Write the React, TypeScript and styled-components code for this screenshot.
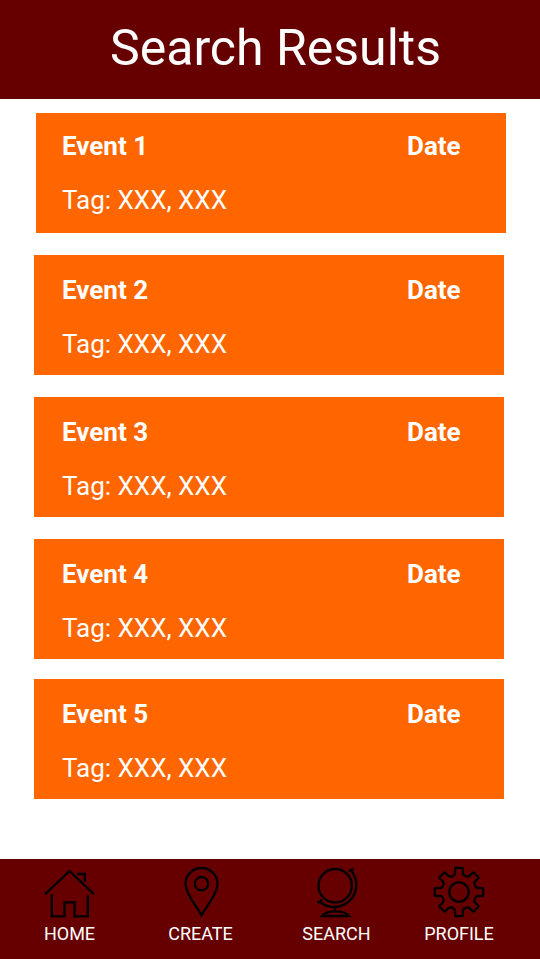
import React from "react";
import styled, { createGlobalStyle } from "styled-components";

const GlobalStyle = createGlobalStyle`
  * { box-sizing: border-box; }
  body { margin: 0; background: #fff; font-family: Roboto, sans-serif; color: #fff; }
`;

const Screen = styled.div`
  width: 540px;
  height: 959px;
  display: flex;
  flex-direction: column;
  overflow: hidden;
`;

const Header = styled.header`
  height: 99px;
  flex: none;
  padding: 19px 0 0 11px;
  background: #660000;
  text-align: center;
`;

const Title = styled.h1`
  margin: 0;
  font-size: 50px;
  line-height: 58px;
  font-weight: 400;
  white-space: nowrap;
`;

const Results = styled.main`
  flex: 1;
  display: flex;
  flex-direction: column;
  padding: 14px 0 0 34px;
`;

const Card = styled.article<{ $shifted?: boolean; $gap: number }>`
  width: 470px;
  height: 120px;
  flex: none;
  margin-left: ${(p) => (p.$shifted ? 2 : 0)}px;
  margin-bottom: ${(p) => p.$gap}px;
  padding: ${(p) => (p.$shifted ? "18px 0 0 26px" : "20px 0 0 28px")};
  background: #ff6600;
  font-size: 26px;
  line-height: 30px;
`;

const CardTop = styled.div`
  display: grid;
  grid-template-columns: 345px 1fr;
  margin-bottom: 24px;
  font-weight: 700;
`;

const Tags = styled.div`
  white-space: nowrap;
`;

const Nav = styled.nav`
  height: 100px;
  flex: none;
  display: grid;
  grid-template-columns: 139px 123px 149px 96px;
  padding-top: 8px;
  background: #660000;
`;

const NavItem = styled.div`
  display: flex;
  flex-direction: column;
  align-items: center;
  font-size: 18px;
  line-height: 22px;
`;

const Icon = styled.svg`
  width: 52px;
  height: 50px;
  margin-bottom: 6px;
  overflow: visible;
  fill: none;
  stroke: #000;
  stroke-width: 7;
`;

const HomeIcon = () => (
  <Icon viewBox="40.5 36 156 150">
    <path d="M43 118 L117 48 L191 118 M139 57 H163 V81 M64 118 V184 H102 V142 H132 V184 H172 V121" />
  </Icon>
);

const PinIcon = () => (
  <Icon viewBox="43.5 36 156 150">
    <path d="M123 181 C111 158 75 118 75 86 A48 47 0 0 1 171 86 C171 118 135 158 123 181 Z" />
    <circle cx="123" cy="86" r="20" />
  </Icon>
);

const GlobeIcon = () => (
  <Icon viewBox="46.5 36 156 150">
    <circle cx="119" cy="92" r="50" />
    <path d="M160 49 L174 41 M168 48 A66.5 66.5 0 0 1 74 141 M66 144 L80 134 M119 158 V170 M79 183 H161 Q150 169 120 169 Q90 169 79 183 Z" />
  </Icon>
);

const toothAngles = [0, 45, 90, 135, 180, 225, 270, 315];
const point = (radius: number, angle: number) => {
  const a = (angle * Math.PI) / 180;
  return `${(117 + radius * Math.sin(a)).toFixed(1)} ${(111 - radius * Math.cos(a)).toFixed(1)}`;
};
const gearPath =
  toothAngles
    .map(
      (a, i) =>
        `${i ? "L" : "M"}${point(57, a - 12)} L${point(71, a - 9.5)} Q${point(74, a - 9)} ${point(73, a - 6)} L${point(73, a + 6)} Q${point(74, a + 9)} ${point(71, a + 9.5)} L${point(57, a + 12)} Q${point(53, a + 14)} ${point(52, a + 18)} L${point(52, a + 27)} Q${point(53, a + 31)} ${point(57, a + 33)}`,
    )
    .join(" ") + " Z";

const GearIcon = () => (
  <Icon viewBox="39 36 156 150" strokeLinejoin="round">
    <path d={gearPath} />
    <circle cx="117" cy="111" r="29" />
  </Icon>
);

const events = [
  { name: "Event 1", gap: 22 },
  { name: "Event 2", gap: 22 },
  { name: "Event 3", gap: 22 },
  { name: "Event 4", gap: 20 },
  { name: "Event 5", gap: 0 },
];

const links = [
  { label: "HOME", Glyph: HomeIcon },
  { label: "CREATE", Glyph: PinIcon },
  { label: "SEARCH", Glyph: GlobeIcon },
  { label: "PROFILE", Glyph: GearIcon },
];

export default function App() {
  return (
    <Screen>
      <GlobalStyle />
      <Header>
        <Title>Search Results</Title>
      </Header>
      <Results>
        {events.map((event, i) => (
          <Card key={event.name} $shifted={i === 0} $gap={event.gap}>
            <CardTop>
              <span>{event.name}</span>
              <span>Date</span>
            </CardTop>
            <Tags>Tag: XXX, XXX</Tags>
          </Card>
        ))}
      </Results>
      <Nav>
        {links.map(({ label, Glyph }) => (
          <NavItem key={label}>
            <Glyph />
            <span>{label}</span>
          </NavItem>
        ))}
      </Nav>
    </Screen>
  );
}
